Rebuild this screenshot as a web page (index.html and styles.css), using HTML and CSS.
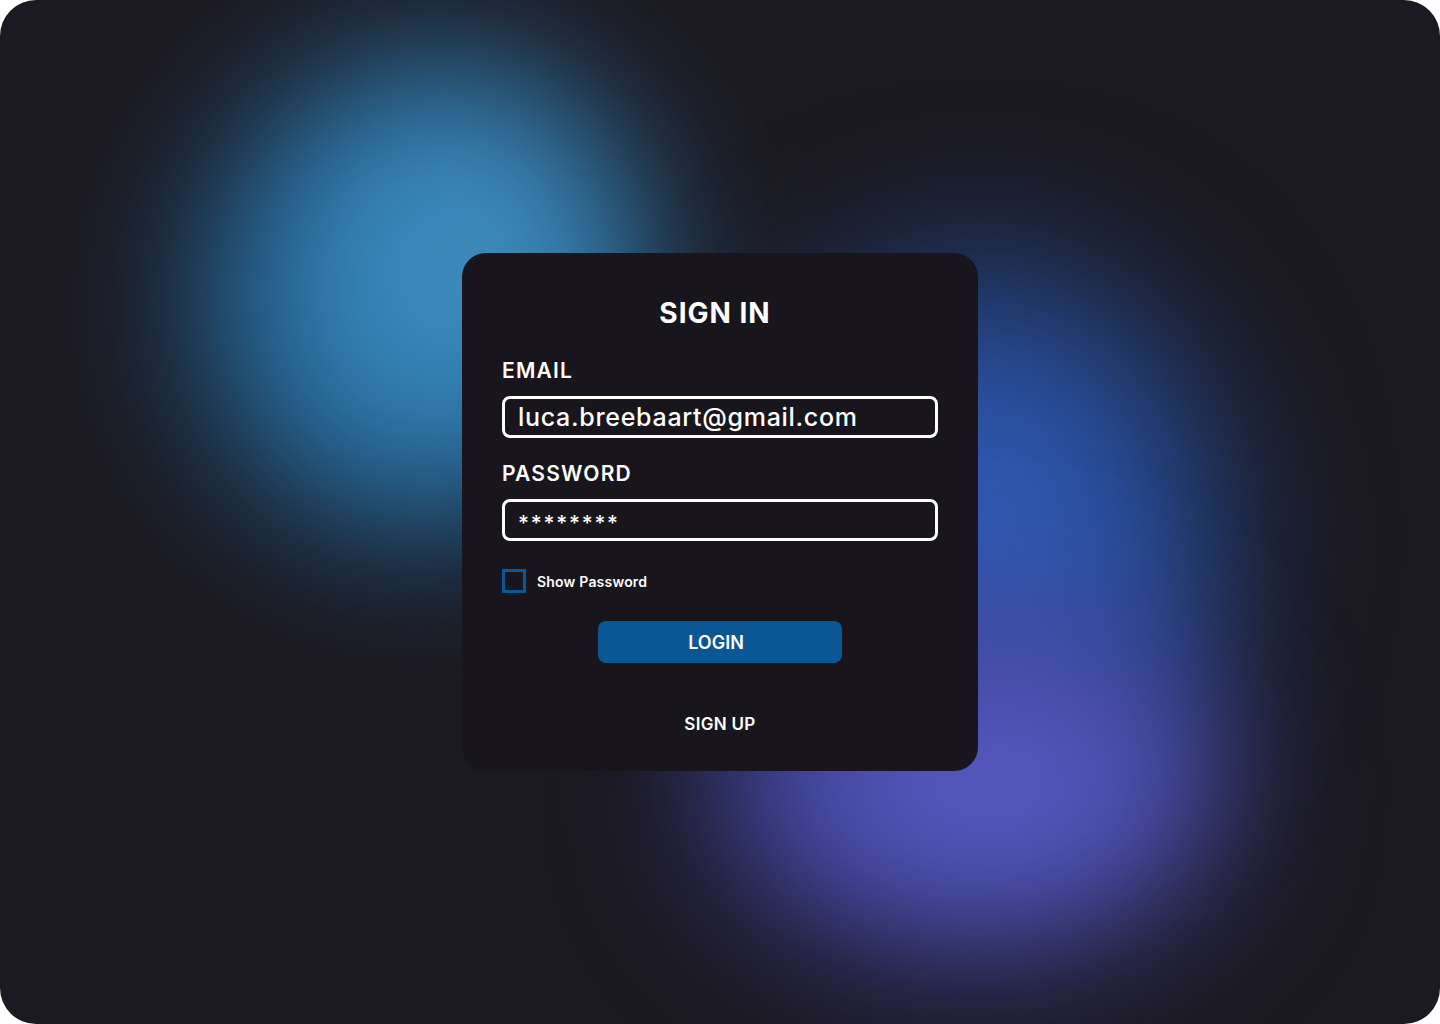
FILE: index.html
```html
<!DOCTYPE html>
<html lang="en">
<head>
<meta charset="utf-8">
<title>Sign In</title>
<link rel="stylesheet" href="styles.css">
</head>
<body>
<div class="frame">
  <div class="blob blob-a"></div>
  <div class="blob blob-b"></div>
  <div class="blob blob-c"></div>
  <form class="card">
    <h1 class="title">SIGN IN</h1>
    <label class="label" for="email">EMAIL</label>
    <div class="field"><span class="value" id="email">luca.breebaart@gmail.com</span></div>
    <label class="label" for="pw">PASSWORD</label>
    <div class="field"><span class="value stars" id="pw">********</span></div>
    <div class="check-row">
      <span class="checkbox"></span>
      <span class="check-label">Show Password</span>
    </div>
    <div class="btn-row"><button type="button" class="login">LOGIN</button></div>
    <div class="signup">SIGN UP</div>
  </form>
</div>
</body>
</html>
```
FILE: styles.css
```css
* { box-sizing: border-box; }
html, body { margin: 0; padding: 0; background: #ffffff; }
body { width: 1440px; height: 1024px; font-family: "Inter", "Open Sans", sans-serif; }
.frame {
  position: relative;
  width: 1440px;
  height: 1024px;
  border-radius: 36px;
  overflow: hidden;
  background: #1b1921;
  display: flex;
  align-items: center;
  justify-content: center;
}
.blob { position: absolute; border-radius: 50%; filter: blur(70px); }
.blob-a {
  left: 185px; top: 50px; width: 470px; height: 500px;
  background: radial-gradient(ellipse at 55% 40%, #4a93bf 0%, #3383b9 35%, #1d5580 65%, rgba(27,25,33,0) 100%);
  transform: rotate(20deg);
}
.blob-b {
  left: 720px; top: 240px; width: 520px; height: 600px;
  background: radial-gradient(ellipse at 50% 55%, #3464c4 0%, #2b51a4 40%, #1b3560 70%, rgba(27,25,33,0) 100%);
}
.blob-c {
  left: 700px; top: 600px; width: 530px; height: 370px;
  background: radial-gradient(ellipse at 55% 50%, #5e60cc 0%, #5052b6 40%, #313174 70%, rgba(27,25,33,0) 100%);
}
.card {
  position: relative;
  z-index: 1;
  width: 516px;
  height: 518px;
  margin: 0;
  background: #18161c;
  border-radius: 24px;
  padding: 40px 40px 0 40px;
  display: flex;
  flex-direction: column;
  color: #ffffff;
}
.title {
  margin: 0 0 25px 0;
  text-align: center;
  font-size: 28px;
  font-weight: 700;
  line-height: 40px;
  padding-right: 10px;
  letter-spacing: 1px;
}
.label {
  display: block;
  font-size: 21px;
  font-weight: 600;
  line-height: 26px;
  margin-bottom: 12px;
  letter-spacing: 1.2px;
}
.field {
  height: 42px;
  border: 3px solid #ffffff;
  border-radius: 8px;
  display: flex;
  align-items: center;
  padding-left: 13px;
  margin-bottom: 23px;
}
.value { font-size: 25px; font-weight: 500; line-height: 1; letter-spacing: 0.7px; }
.stars { font-size: 21px; letter-spacing: 1.8px; padding-top: 7px; }
.check-row {
  display: flex;
  align-items: center;
  gap: 11px;
  margin-top: 5px;
}
.checkbox {
  width: 24px; height: 24px;
  border: 3px solid #0b5799;
  display: block;
}
.check-label { font-size: 14px; font-weight: 600; letter-spacing: 0.2px; }
.btn-row { display: flex; justify-content: center; margin-top: 28px; }
.login {
  width: 244px; height: 42px;
  background: #0b5796;
  border: none;
  border-radius: 8px;
  color: #ffffff;
  font-family: inherit;
  font-size: 18px;
  font-weight: 600;
  padding: 0 8px 0 0;
}
.signup {
  text-align: center;
  margin-top: 51px;
  font-size: 17px;
  font-weight: 600;
  letter-spacing: 0.3px;
}
```
